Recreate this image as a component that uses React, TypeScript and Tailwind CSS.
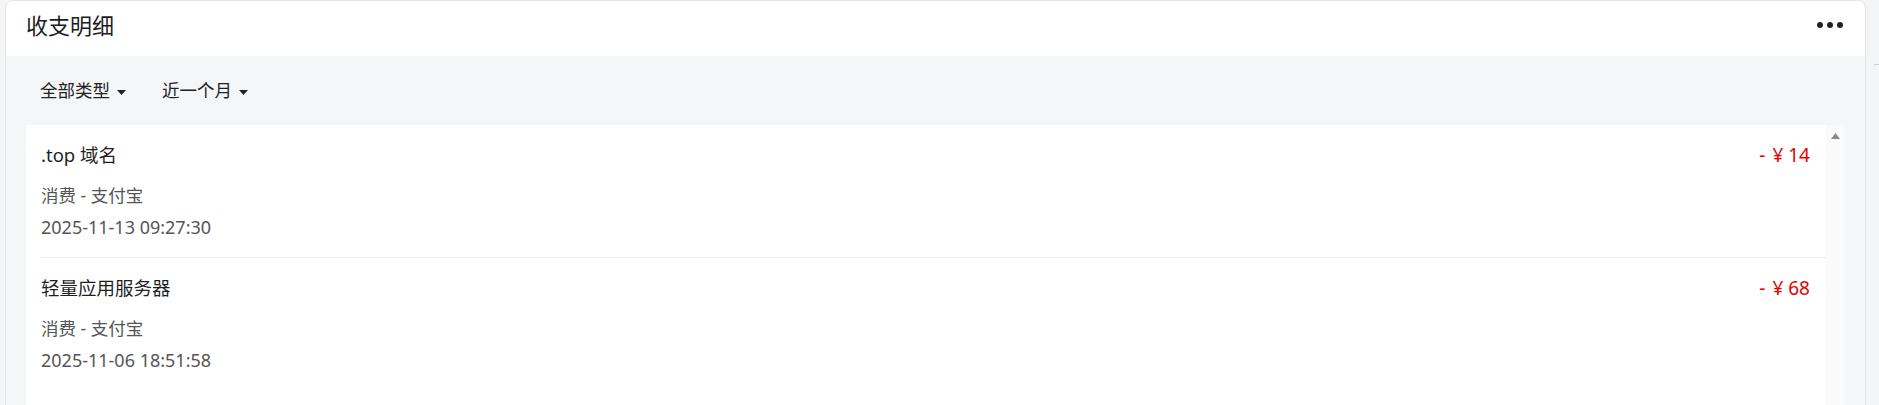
import React from "react";

type Record = {
  id: number;
  title: string;
  source: string;
  time: string;
  amount: number;
};

const records: Record[] = [
  { id: 1, title: ".top 域名", source: "消费 - 支付宝", time: "2025-11-13 09:27:30", amount: 14 },
  { id: 2, title: "轻量应用服务器", source: "消费 - 支付宝", time: "2025-11-06 18:51:58", amount: 68 },
];

const font = { fontFamily: '"Noto Sans", "Noto Sans CJK SC", sans-serif' };

function Caret() {
  return (
    <svg width="9" height="5" viewBox="0 0 9 5" className="ml-[7px] mt-[3px]">
      <path d="M0 0 L9 0 L4.5 5 Z" fill="#222" />
    </svg>
  );
}

export default function App() {
  return (
    <div className="relative h-[405px] w-[1879px] overflow-hidden bg-[#f4f5f6]" style={font}>
      {/* stray dash outside the card */}
      <div className="absolute left-[1874px] top-[64px] h-px w-[5px] bg-[#cfcfcf]" />

      <div className="ml-[5px] w-[1861px] h-[440px] bg-white border border-[#e6e6e6] rounded-t-lg flex flex-col">
        {/* Header */}
        <div className="h-[55px] flex items-center justify-between pl-[20px] pr-[22px] pb-[8px]">
          <h2 className="text-[22px] leading-[28px] text-[#1c1c1c]">收支明细</h2>
          <div className="flex items-center gap-[4px]">
            <span className="w-[6px] h-[6px] rounded-full bg-[#222]" />
            <span className="w-[6px] h-[6px] rounded-full bg-[#222]" />
            <span className="w-[6px] h-[6px] rounded-full bg-[#222]" />
          </div>
        </div>

        {/* Filters + list */}
        <div className="flex-1 bg-[#f5f6f8] flex flex-col">
          <div className="h-[69px] flex items-center pl-[34px] gap-[36px] text-[17.5px] text-[#222]">
            <button className="flex items-center">
              全部类型
              <Caret />
            </button>
            <button className="flex items-center">
              近一个月
              <Caret />
            </button>
          </div>

          <div className="mx-[20px] flex-1 bg-white flex">
            <div className="flex-1">
              {records.map((r) => (
                <div key={r.id} className="pl-[15px] group">
                  <div className="border-b border-[#ececec] group-last:border-b-0 pt-[16px] pb-[18px] pr-[16px]">
                    <div className="flex items-center justify-between leading-[28px]">
                      <span className="text-[18.5px] text-[#1f1f1f]">{r.title}</span>
                      <span className="text-[19px] text-[#e60000] flex gap-[7px]">
                        <span>-</span>
                        <span>¥</span>
                        <span className="-ml-[2px]">{r.amount}</span>
                      </span>
                    </div>
                    <div className="mt-[14px] text-[17.5px] leading-[24px] text-[#555]">{r.source}</div>
                    <div className="mt-[8px] text-[18px] leading-[24px] text-[#555]">{r.time}</div>
                  </div>
                </div>
              ))}
            </div>
            {/* scrollbar track */}
            <div className="w-[19px] bg-[#fafafa] flex justify-center pt-[8px]">
              <svg width="9" height="6" viewBox="0 0 9 6">
                <path d="M4.5 0 L9 6 L0 6 Z" fill="#8a8a8a" />
              </svg>
            </div>
          </div>
        </div>
      </div>
    </div>
  );
}
